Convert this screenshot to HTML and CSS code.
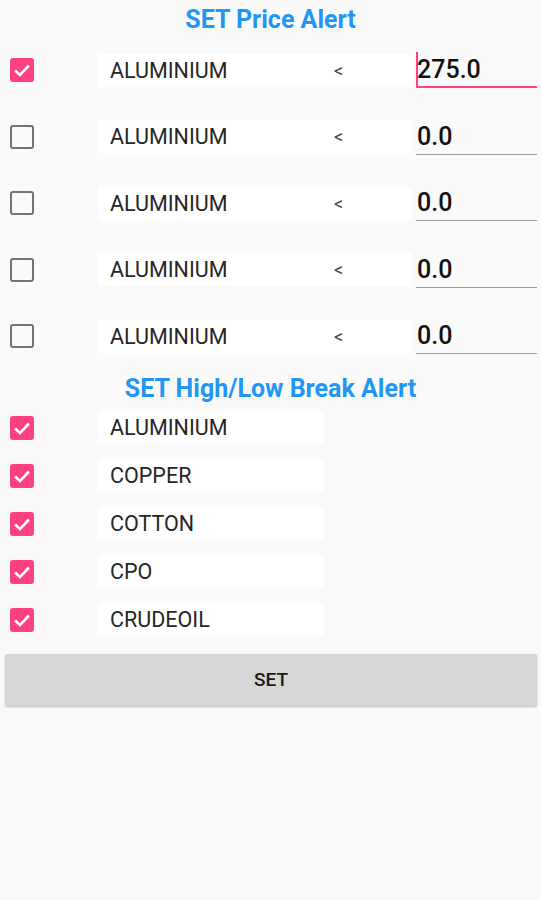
FILE: index.html
```html
<!DOCTYPE html>
<html>
<head>
<meta charset="utf-8">
<link rel="stylesheet" href="styles.css">
</head>
<body>
<div class="screen">
  <div class="title title-price">SET Price Alert</div>

  <div class="price-row">
    <span class="cb cb-on"><svg viewBox="0 0 24 24" width="24" height="24"><rect x="0" y="0" width="24" height="24" rx="3" fill="#ff4081"/><polyline points="5,12.5 10,17 19,7.5" fill="none" stroke="#fff" stroke-width="2.6"/></svg></span>
    <div class="name-box"><span class="name">ALUMINIUM</span><span class="op">&lt;</span></div>
    <div class="input focused"><span class="caret"></span>275.0</div>
  </div>
  <div class="price-row">
    <span class="cb cb-off"></span>
    <div class="name-box"><span class="name">ALUMINIUM</span><span class="op">&lt;</span></div>
    <div class="input">0.0</div>
  </div>
  <div class="price-row">
    <span class="cb cb-off"></span>
    <div class="name-box"><span class="name">ALUMINIUM</span><span class="op">&lt;</span></div>
    <div class="input">0.0</div>
  </div>
  <div class="price-row">
    <span class="cb cb-off"></span>
    <div class="name-box"><span class="name">ALUMINIUM</span><span class="op">&lt;</span></div>
    <div class="input">0.0</div>
  </div>
  <div class="price-row">
    <span class="cb cb-off"></span>
    <div class="name-box"><span class="name">ALUMINIUM</span><span class="op">&lt;</span></div>
    <div class="input">0.0</div>
  </div>

  <div class="title title-break">SET High/Low Break Alert</div>

  <div class="break-row">
    <span class="cb cb-on"><svg viewBox="0 0 24 24" width="24" height="24"><rect x="0" y="0" width="24" height="24" rx="3" fill="#ff4081"/><polyline points="5,12.5 10,17 19,7.5" fill="none" stroke="#fff" stroke-width="2.6"/></svg></span>
    <div class="break-box">ALUMINIUM</div>
  </div>
  <div class="break-row">
    <span class="cb cb-on"><svg viewBox="0 0 24 24" width="24" height="24"><rect x="0" y="0" width="24" height="24" rx="3" fill="#ff4081"/><polyline points="5,12.5 10,17 19,7.5" fill="none" stroke="#fff" stroke-width="2.6"/></svg></span>
    <div class="break-box">COPPER</div>
  </div>
  <div class="break-row">
    <span class="cb cb-on"><svg viewBox="0 0 24 24" width="24" height="24"><rect x="0" y="0" width="24" height="24" rx="3" fill="#ff4081"/><polyline points="5,12.5 10,17 19,7.5" fill="none" stroke="#fff" stroke-width="2.6"/></svg></span>
    <div class="break-box">COTTON</div>
  </div>
  <div class="break-row">
    <span class="cb cb-on"><svg viewBox="0 0 24 24" width="24" height="24"><rect x="0" y="0" width="24" height="24" rx="3" fill="#ff4081"/><polyline points="5,12.5 10,17 19,7.5" fill="none" stroke="#fff" stroke-width="2.6"/></svg></span>
    <div class="break-box">CPO</div>
  </div>
  <div class="break-row">
    <span class="cb cb-on"><svg viewBox="0 0 24 24" width="24" height="24"><rect x="0" y="0" width="24" height="24" rx="3" fill="#ff4081"/><polyline points="5,12.5 10,17 19,7.5" fill="none" stroke="#fff" stroke-width="2.6"/></svg></span>
    <div class="break-box">CRUDEOIL</div>
  </div>

  <button class="set-btn">SET</button>
</div>
</body>
</html>
```
FILE: styles.css
```css
html, body {
  margin: 0;
  padding: 0;
  background: #fafafa;
}
.screen {
  width: 541px;
  height: 900px;
  font-family: Roboto, "Noto Sans", "Liberation Sans", sans-serif;
  background: #fafafa;
}
.title {
  text-align: center;
  color: #2196f3;
  font-size: 25px;
  font-weight: 700;
  line-height: 30px;
}
.title-price {
  padding: 5px 0 2px;
}
.title-break {
  padding: 4px 0 0;
}
.price-row {
  height: 66.5px;
  display: flex;
  align-items: center;
}
.cb {
  display: block;
  width: 24px;
  height: 24px;
  margin-left: 10px;
  box-sizing: border-box;
  flex: none;
}
.cb svg {
  display: block;
}
.cb-off {
  border: 2px solid #737373;
  border-radius: 3px;
}
.name-box {
  margin-left: 64px;
  width: 314px;
  height: 33px;
  background: #ffffff;
  display: flex;
  align-items: center;
  box-sizing: border-box;
  padding-left: 12px;
  font-size: 21.5px;
  color: #262626;
}
.name {
  width: 224px;
}
.op {
  font-size: 18px;
  color: #444;
}
.input {
  position: relative;
  margin-left: 4px;
  width: 121px;
  height: 35px;
  box-sizing: border-box;
  border-bottom: 1.5px solid #9e9e9e;
  font-size: 25px;
  font-weight: 500;
  color: #111;
  line-height: 34px;
  padding-left: 1px;
  margin-top: 1px;
}
.input.focused {
  border-bottom: 2px solid #ff4081;
}
.caret {
  position: absolute;
  left: 0;
  top: -1px;
  width: 2px;
  height: 36px;
  background: #ff4081;
}
.break-row {
  height: 48px;
  display: flex;
  align-items: center;
}
.break-box {
  margin-left: 64px;
  width: 226px;
  height: 31px;
  background: #ffffff;
  box-sizing: border-box;
  padding-left: 12px;
  font-size: 21.5px;
  line-height: 31px;
  color: #262626;
}
.set-btn {
  display: block;
  margin: 10px 4px 0 5px;
  width: 532px;
  height: 52px;
  border: none;
  border-radius: 2px;
  background: #d6d7d6;
  box-shadow: 0 1px 2px rgba(0,0,0,0.25);
  font-family: Roboto, "Noto Sans", "Liberation Sans", sans-serif;
  font-size: 19px;
  font-weight: 500;
  color: #1a1a1a;
  padding: 0;
}
```
